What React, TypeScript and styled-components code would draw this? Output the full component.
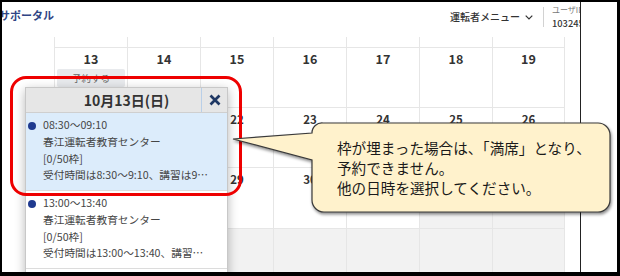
import React from "react";
import styled, { createGlobalStyle } from "styled-components";

const GlobalStyle = createGlobalStyle`
  html, body { margin: 0; padding: 0; background: #000; }
  body { font-family: "Noto Sans CJK JP", "Noto Sans", sans-serif; }
  * { box-sizing: border-box; }
`;

const Frame = styled.div`
  width: 620px;
  height: 276px;
  padding: 2px 3px 4px 2px;
  background: #000;
`;

const Slide = styled.div`
  position: relative;
  display: flex;
  height: 100%;
  background: #fff;
`;

const Screen = styled.div`
  position: relative;
  flex: none;
  width: 579px;
  height: 100%;
  overflow: hidden;
  border-right: 1px solid #222;
  background: #fff;
`;

const Blank = styled.div`
  flex: 1;
  background: #fff;
`;

const TopBar = styled.div`
  display: grid;
  grid-template-columns: 1fr auto auto 28px;
  align-items: start;
  height: 35px;
`;

const Brand = styled.div`
  margin: 5px 0 0 -3px;
  font-size: 11px;
  line-height: 16px;
  font-weight: 700;
  color: #2f4585;
  white-space: nowrap;
`;

const Menu = styled.div`
  display: flex;
  align-items: center;
  gap: 5px;
  margin-top: 7px;
  font-size: 10px;
  line-height: 16px;
  font-weight: 500;
  color: #333;
  white-space: nowrap;
`;

const Sep = styled.div`
  width: 1px;
  height: 20px;
  margin: 5px 8px 0 10px;
  background: #d2d2d2;
`;

const User = styled.div`
  margin-top: 2px;
  white-space: nowrap;
`;

const UserLabel = styled.div`
  font-size: 8px;
  line-height: 11px;
  color: #777;
`;

const UserId = styled.div`
  margin-top: 1px;
  font-size: 9.3px;
  line-height: 14px;
  font-weight: 500;
  color: #333;
`;

const Calendar = styled.div`
  display: grid;
  grid-template-columns: repeat(7, 1fr);
  grid-template-rows: 10px 60px 60px 61px 60px;
  width: 511px;
  margin-left: 52px;
`;

const StripCell = styled.div<{ $last?: boolean }>`
  border-left: 1px solid #e6e6e6;
  border-right: ${(p) => (p.$last ? "1px solid #e6e6e6" : "none")};
`;

const DayCell = styled.div<{ $last?: boolean; $muted?: boolean }>`
  display: flex;
  flex-direction: column;
  align-items: center;
  padding-top: 4px;
  border-top: 1px solid #e6e6e6;
  border-left: 1px solid #e6e6e6;
  border-right: ${(p) => (p.$last ? "1px solid #e6e6e6" : "none")};
  background: ${(p) => (p.$muted ? "#f2f2f2" : "#fff")};
`;

const DayNum = styled.div<{ $big?: boolean }>`
  font-size: ${(p) => (p.$big ? "12.5px" : "11.5px")};
  line-height: 14px;
  font-weight: 700;
  color: #333;
`;

const ReserveBtn = styled.div`
  align-self: stretch;
  margin: 3px 2px 0 2px;
  height: 18px;
  border-radius: 2px;
  background: #e8eaed;
  color: #666;
  font-size: 9.5px;
  line-height: 18px;
  text-align: center;
`;

const Popup = styled.div`
  position: absolute;
  left: 23px;
  top: 85px;
  width: 203px;
  height: 200px;
  border: 1px solid #c8c8c8;
  background: #fff;
  box-shadow: 0 3px 10px rgba(0, 0, 0, 0.28);
`;

const PopupHeader = styled.div`
  display: grid;
  grid-template-columns: 26px 1fr 26px;
  height: 25px;
  border-bottom: 1px solid #cfcfcf;
  background: #e6e6e6;
`;

const PopupTitle = styled.div`
  grid-column: 2;
  font-size: 14px;
  line-height: 24px;
  font-weight: 700;
  color: #333;
  text-align: center;
  white-space: nowrap;
`;

const CloseBox = styled.div`
  grid-column: 3;
  display: flex;
  align-items: center;
  justify-content: center;
  border-left: 1px solid #b9cfe8;
`;

const Slot = styled.div<{ $active?: boolean }>`
  display: grid;
  grid-template-columns: 8px 1fr;
  column-gap: 7px;
  padding: 4px 16px 6px 2px;
  border-bottom: 1px solid #dcdcdc;
  background: ${(p) => (p.$active ? "#dcecfb" : "#fff")};
`;

const Bullet = styled.div`
  width: 8px;
  height: 8px;
  margin-top: 4.5px;
  border-radius: 50%;
  background: #1f3a8f;
`;

const SlotText = styled.div`
  min-width: 0;
  font-size: 10.7px;
  line-height: 16.75px;
  color: #454545;
`;

const SlotLine = styled.div`
  white-space: nowrap;
  overflow: hidden;
  text-overflow: ellipsis;
`;

const RedFrame = styled.div`
  position: absolute;
  left: 8px;
  top: 74px;
  width: 232px;
  height: 120px;
  border: 3px solid #ee0000;
  border-radius: 16px;
`;

const Callout = styled.div`
  position: absolute;
  left: 230px;
  top: 120px;
  width: 384px;
  height: 96px;
`;

const CalloutShape = styled.svg`
  position: absolute;
  inset: 0;
  overflow: visible;
  filter: drop-shadow(1.5px 2px 1.5px rgba(0, 0, 0, 0.45));
`;

const CalloutText = styled.div`
  position: relative;
  padding: 16px 0 0 105px;
  font-size: 14.6px;
  line-height: 20px;
  color: #1a1a1a;
  white-space: nowrap;
`;

type Cell = { n?: number; muted?: boolean; btn?: boolean };

const rows: Cell[][] = [
  [{ n: 13, btn: true }, { n: 14 }, { n: 15 }, { n: 16 }, { n: 17 }, { n: 18 }, { n: 19 }],
  [{ n: 20 }, { n: 21 }, { n: 22 }, { n: 23 }, { n: 24 }, { n: 25 }, { n: 26 }],
  [{ n: 27 }, { n: 28 }, { n: 29 }, { n: 30 }, { n: 31 }, { muted: true }, { muted: true }],
  [{ muted: true }, { muted: true }, { muted: true }, { muted: true }, { muted: true }, { muted: true }, { muted: true }],
];

const slots = [
  {
    time: "08:30〜09:10",
    place: "春江運転者教育センター",
    seats: "[0/50枠]",
    note: "受付時間は8:30〜9:10、講習は9:10〜12:00です。",
    active: true,
  },
  {
    time: "13:00〜13:40",
    place: "春江運転者教育センター",
    seats: "[0/50枠]",
    note: "受付時間は13:00〜13:40、講習は13:40〜16:30です。",
    active: false,
  },
];

export default function App() {
  return (
    <>
      <GlobalStyle />
      <Frame>
        <Slide>
          <Screen>
            <TopBar>
              <Brand>サポータル</Brand>
              <Menu>
                運転者メニュー
                <svg width="8" height="5" viewBox="0 0 8 5">
                  <path d="M0.7 0.7 L4 4 L7.3 0.7" fill="none" stroke="#333" strokeWidth="1.2" />
                </svg>
              </Menu>
              <Sep />
              <User>
                <UserLabel>ユーザID</UserLabel>
                <UserId>10324567</UserId>
              </User>
            </TopBar>
            <Calendar>
              {Array.from({ length: 7 }).map((_, i) => (
                <StripCell key={"s" + i} $last={i === 6} />
              ))}
              {rows.map((row, r) =>
                row.map((c, i) => (
                  <DayCell key={r + "-" + i} $last={i === 6} $muted={c.muted}>
                    {c.n !== undefined && <DayNum $big={r === 0}>{c.n}</DayNum>}
                    {c.btn && <ReserveBtn>予約する</ReserveBtn>}
                  </DayCell>
                ))
              )}
            </Calendar>
            <Popup>
              <PopupHeader>
                <PopupTitle>10月13日(日)</PopupTitle>
                <CloseBox>
                  <svg width="12" height="12" viewBox="0 0 12 12">
                    <path d="M1.5 1.5 L10.5 10.5 M10.5 1.5 L1.5 10.5" stroke="#1f3864" strokeWidth="2.7" />
                  </svg>
                </CloseBox>
              </PopupHeader>
              {slots.map((s, i) => (
                <Slot key={i} $active={s.active}>
                  <Bullet />
                  <SlotText>
                    <SlotLine>{s.time}</SlotLine>
                    <SlotLine>{s.place}</SlotLine>
                    <SlotLine>{s.seats}</SlotLine>
                    <SlotLine>{s.note}</SlotLine>
                  </SlotText>
                </Slot>
              ))}
            </Popup>
          </Screen>
          <Blank />
          <RedFrame />
          <Callout>
            <CalloutShape width="384" height="96" viewBox="0 0 384 96">
              <path
                d="M91 1 H366 A12 12 0 0 1 378 13 V78 A12 12 0 0 1 366 90 H92 A12 12 0 0 1 80 78 V38 L1 17 L80 11 A10 10 0 0 1 91 1 Z"
                fill="#fff2cc"
                stroke="#3a3a3a"
                strokeWidth="1.2"
              />
            </CalloutShape>
            <CalloutText>
              枠が埋まった場合は、「満席」となり、
              <br />
              予約できません。
              <br />
              他の日時を選択してください。
            </CalloutText>
          </Callout>
        </Slide>
      </Frame>
    </>
  );
}
